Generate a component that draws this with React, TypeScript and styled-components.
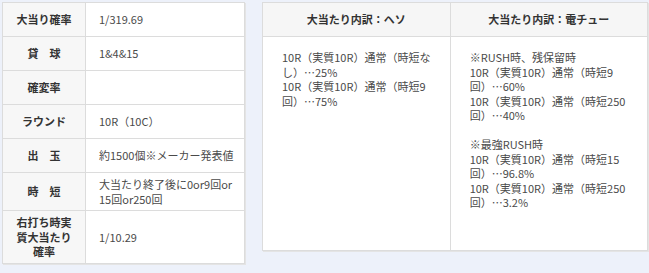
import React from "react";
import styled, { createGlobalStyle } from "styled-components";

const Global = createGlobalStyle`
  html, body { margin: 0; padding: 0; background: #edf1fa; }
  body {
    font-family: "Noto Sans CJK JP", "Noto Sans", sans-serif;
    font-size: 11px;
    color: #444;
  }
`;

const Page = styled.div`
  display: flex;
  align-items: flex-start;
  gap: 17px;
  padding: 2px 1px 0 2px;
  width: 649px;
  height: 273px;
  box-sizing: border-box;
  background: #edf1fa;
`;

const SpecTable = styled.table`
  width: 243px;
  border-collapse: collapse;
  background: #fff;
  border: 1px solid #d6d6d6;
  box-shadow: 1px 1px 0 #e4e4e4;
  line-height: 14.5px;
`;

const Label = styled.th`
  width: 66px;
  padding: 4px 8px;
  height: 25px;
  background: #f7f7f7;
  border: 1px solid #dcdcdc;
  color: #333;
  font-weight: bold;
  text-align: center;
  vertical-align: middle;
`;

const Value = styled.td`
  padding: 4px 8px 4px 13px;
  border: 1px solid #dcdcdc;
  color: #4a4a4a;
  vertical-align: middle;
  text-align: left;
`;

const BreakdownTable = styled.table`
  width: 386px;
  border-collapse: collapse;
  background: #fff;
  border: 1px solid #d6d6d6;
  box-shadow: 1px 1px 0 #e4e4e4;
  line-height: 14.5px;
`;

const Head = styled.th<{ $w: number }>`
  width: ${(p) => p.$w}px;
  height: 33px;
  padding: 0;
  background: #f6f6f6;
  border: 1px solid #dcdcdc;
  color: #333;
  font-weight: bold;
  text-align: center;
  vertical-align: middle;
`;

const Body = styled.td`
  height: 190px;
  padding: 13px 10px 10px 19px;
  border: 1px solid #dcdcdc;
  color: #4a4a4a;
  vertical-align: top;
  text-align: left;
`;

const Line = styled.div`
  white-space: nowrap;
  min-height: 14.5px;
`;

const specs: [string, string[]][] = [
  ["大当り確率", ["1/319.69"]],
  ["貸　球", ["1&4&15"]],
  ["確変率", [""]],
  ["ラウンド", ["10R（10C）"]],
  ["出　玉", ["約1500個※メーカー発表値"]],
  ["時　短", ["大当たり終了後に0or9回or", "15回or250回"]],
  ["右打ち時実\n質大当たり\n確率", ["1/10.29"]],
];

const heso = ["10R（実質10R）通常（時短な", "し）…25%", "10R（実質10R）通常（時短9", "回）…75%"];
const denchu = [
  "※RUSH時、残保留時",
  "10R（実質10R）通常（時短9",
  "回）…60%",
  "10R（実質10R）通常（時短250",
  "回）…40%",
  "",
  "※最強RUSH時",
  "10R（実質10R）通常（時短15",
  "回）…96.8%",
  "10R（実質10R）通常（時短250",
  "回）…3.2%",
];

export default function App() {
  return (
    <>
      <Global />
      <Page>
        <SpecTable>
          <tbody>
            {specs.map(([k, v]) => (
              <tr key={k}>
                <Label>
                  {k.split("\n").map((s) => (
                    <Line key={s}>{s}</Line>
                  ))}
                </Label>
                <Value>
                  {v.map((s, i) => (
                    <Line key={i}>{s}</Line>
                  ))}
                </Value>
              </tr>
            ))}
          </tbody>
        </SpecTable>
        <BreakdownTable>
          <thead>
            <tr>
              <Head $w={188}>大当たり内訳：ヘソ</Head>
              <Head $w={198}>大当たり内訳：電チュー</Head>
            </tr>
          </thead>
          <tbody>
            <tr>
              <Body>
                {heso.map((s, i) => (
                  <Line key={i}>{s}</Line>
                ))}
              </Body>
              <Body>
                {denchu.map((s, i) => (
                  <Line key={i}>{s}</Line>
                ))}
              </Body>
            </tr>
          </tbody>
        </BreakdownTable>
      </Page>
    </>
  );
}
